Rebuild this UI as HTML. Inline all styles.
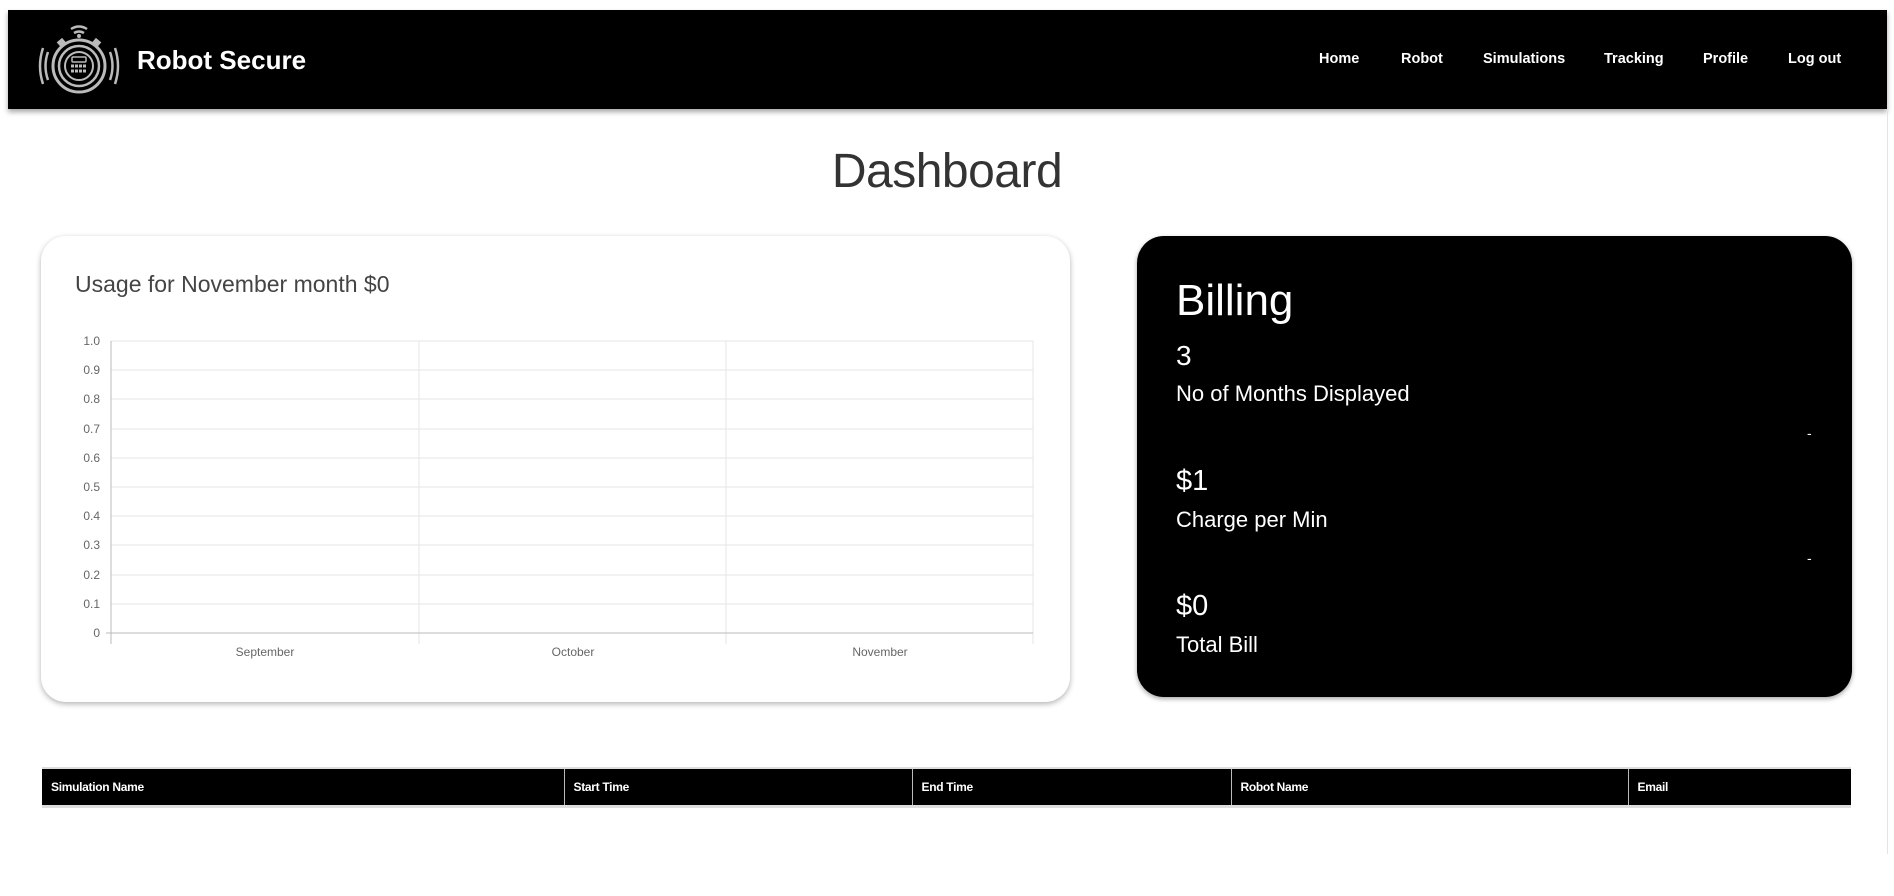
<!DOCTYPE html>
<html><head><meta charset="utf-8"><style>
*{margin:0;padding:0;box-sizing:border-box}
body{width:1894px;height:896px;background:#fff;position:relative;overflow:hidden;font-family:"Liberation Sans",Arial,sans-serif}
.nav{position:absolute;left:8px;top:10px;width:1879px;height:99px;background:#000;box-shadow:0 3px 5px rgba(0,0,0,.35)}
.brand{position:absolute;left:129px;top:35px;color:#fff;font-weight:bold;font-size:26px}
.nl{position:absolute;top:41px;color:#fff;font-weight:bold;font-size:14.5px}
.t{position:absolute;white-space:nowrap}
.card{position:absolute;border-radius:25px}
.w{color:#fff}
th{background:#000;color:#fff;font-size:12px;font-weight:bold;text-align:left;padding-left:9px;border-left:1px solid #bbb;height:38px;letter-spacing:-0.3px}
</style></head><body>
<div class="nav">
<svg style="position:absolute;left:30px;top:10px" width="82" height="80" viewBox="0 0 82 80" fill="none" stroke="#bbb">
<path d="M33 9 Q41 4 49 9" stroke-width="2.5"/><path d="M36 13 Q41 10 46 13" stroke-width="2.5"/><circle cx="41" cy="16" r="1.5" fill="#bbb"/>
<circle cx="41" cy="46" r="26" stroke-width="3"/><circle cx="41" cy="46" r="20" stroke-width="2.5"/><circle cx="41" cy="46" r="14" stroke-width="2"/>
<rect x="34" y="37" width="14" height="5" rx="1" stroke-width="1.5"/>
<path d="M33 46h16M33 51h16" stroke-width="3" stroke-dasharray="3 1"/>
<path d="M10 32 Q5 46 10 60M5 28 Q-1 46 5 64M72 32 Q77 46 72 60M77 28 Q83 46 77 64" stroke-width="2.5"/>
<rect x="20" y="20" width="6" height="5" fill="#bbb" transform="rotate(-40 23 22)"/><rect x="56" y="20" width="6" height="5" fill="#bbb" transform="rotate(40 59 22)"/>
</svg>
<div class="brand">Robot Secure</div>
<div class="nl" style="left:1311px">Home</div>
<div class="nl" style="left:1393px">Robot</div>
<div class="nl" style="left:1475px">Simulations</div>
<div class="nl" style="left:1596px">Tracking</div>
<div class="nl" style="left:1695px">Profile</div>
<div class="nl" style="left:1780px">Log out</div>
</div>
<div style="position:absolute;left:1887px;top:109px;width:1px;height:745px;background:#e4e4e4"></div>
<div class="t" style="left:0;width:1894px;text-align:center;top:144px;font-size:48px;font-weight:300;color:#333;letter-spacing:-0.5px">Dashboard</div>

<div class="card" style="left:41px;top:236px;width:1029px;height:466px;box-shadow:0 2px 6px rgba(0,0,0,.3)"></div>
<div class="t" style="left:75px;top:271px;font-size:23px;color:#444">Usage for November month $0</div>
<svg style="position:absolute;left:60px;top:330px" width="990" height="340">
<g stroke="#e6e6e6" stroke-width="1">
<line x1="51" y1="11" x2="973" y2="11"/><line x1="51" y1="40" x2="973" y2="40"/><line x1="51" y1="69" x2="973" y2="69"/><line x1="51" y1="99" x2="973" y2="99"/><line x1="51" y1="128" x2="973" y2="128"/><line x1="51" y1="157" x2="973" y2="157"/><line x1="51" y1="186" x2="973" y2="186"/><line x1="51" y1="215" x2="973" y2="215"/><line x1="51" y1="245" x2="973" y2="245"/><line x1="51" y1="274" x2="973" y2="274"/>
<line x1="359" y1="11" x2="359" y2="314"/><line x1="666" y1="11" x2="666" y2="314"/><line x1="973" y1="11" x2="973" y2="314"/>
</g>
<line x1="51" y1="11" x2="51" y2="314" stroke="#bbb"/><line x1="46" y1="303" x2="973" y2="303" stroke="#bbb"/>
<g font-family="Liberation Sans,Arial" font-size="12" fill="#666" text-anchor="end">
<text x="40" y="15">1.0</text><text x="40" y="44">0.9</text><text x="40" y="73">0.8</text><text x="40" y="103">0.7</text><text x="40" y="132">0.6</text><text x="40" y="161">0.5</text><text x="40" y="190">0.4</text><text x="40" y="219">0.3</text><text x="40" y="249">0.2</text><text x="40" y="278">0.1</text><text x="40" y="307">0</text>
</g>
<g font-family="Liberation Sans,Arial" font-size="12" fill="#666" text-anchor="middle"><text x="205" y="326">September</text><text x="513" y="326">October</text><text x="820" y="326">November</text></g>
</svg>

<div class="card" style="left:1137px;top:236px;width:715px;height:461px;background:#000;border-radius:27px;box-shadow:0 2px 5px rgba(0,0,0,.35)"></div>
<div class="t w" style="left:1176px;top:276px;font-size:44px">Billing</div>
<div class="t w" style="left:1176px;top:340px;font-size:28px">3</div>
<div class="t w" style="left:1176px;top:381px;font-size:22px">No of Months Displayed</div>
<div class="t w" style="left:1807px;top:425px;font-size:14px">-</div>
<div class="t w" style="left:1176px;top:465px;font-size:29px">$1</div>
<div class="t w" style="left:1176px;top:507px;font-size:22px">Charge per Min</div>
<div class="t w" style="left:1807px;top:550px;font-size:14px">-</div>
<div class="t w" style="left:1176px;top:590px;font-size:29px">$0</div>
<div class="t w" style="left:1176px;top:632px;font-size:22px">Total Bill</div>

<table style="position:absolute;left:42px;top:767px;width:1809px;border-collapse:collapse;border-top:2px solid #ddd;border-bottom:3px solid #ddd">
<tr><th style="width:522px;border-left:none">Simulation Name</th><th style="width:348px">Start Time</th><th style="width:319px">End Time</th><th style="width:397px">Robot Name</th><th>Email</th></tr>
</table>
</body></html>
